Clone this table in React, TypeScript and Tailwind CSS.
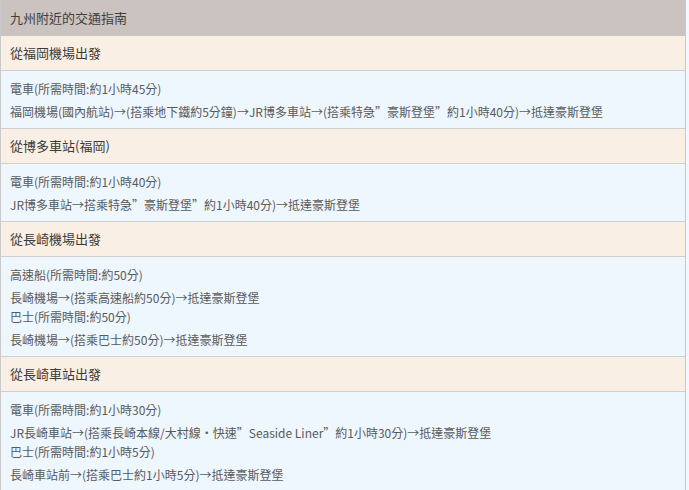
const sections = [
  {
    title: '從福岡機場出發',
    items: [
      {
        mode: '電車(所需時間:約1小時45分)',
        route: '福岡機場(國內航站)→(搭乘地下鐵約5分鐘)→JR博多車站→(搭乘特急”豪斯登堡”約1小時40分)→抵達豪斯登堡',
      },
    ],
  },
  {
    title: '從博多車站(福岡)',
    items: [
      {
        mode: '電車(所需時間:約1小時40分)',
        route: 'JR博多車站→搭乘特急”豪斯登堡”約1小時40分)→抵達豪斯登堡',
      },
    ],
  },
  {
    title: '從長崎機場出發',
    items: [
      { mode: '高速船(所需時間:約50分)', route: '長崎機場→(搭乘高速船約50分)→抵達豪斯登堡' },
      { mode: '巴士(所需時間:約50分)', route: '長崎機場→(搭乘巴士約50分)→抵達豪斯登堡' },
    ],
  },
  {
    title: '從長崎車站出發',
    items: [
      {
        mode: '電車(所需時間:約1小時30分)',
        route: 'JR長崎車站→(搭乘長崎本線/大村線・快速”Seaside Liner”約1小時30分)→抵達豪斯登堡',
      },
      { mode: '巴士(所需時間:約1小時5分)', route: '長崎車站前→(搭乘巴士約1小時5分)→抵達豪斯登堡' },
    ],
  },
];

export default function App() {
  return (
    <div className="min-h-[490px] bg-[#f3f8fe] font-['Noto_Sans_CJK_TC',sans-serif] text-[13px]">
      <div className="w-[686px] border-x border-[#c9c9c9]">
        <div className="flex h-[36px] items-center bg-[#cbc3bf] px-[9px] text-[#3f3f3f]">九州附近的交通指南</div>
        {sections.map((s) => (
          <div key={s.title}>
            <div className="flex h-[35px] items-center border-b border-[#cfcfcf] bg-[#f9efe4] px-[9px] text-[#3a3a3a]">
              {s.title}
            </div>
            <div className="border-b border-[#cfcfcf] bg-[#eef6fe] px-[9px] pt-[8px] pb-[7px] text-[12px] leading-[19px] text-[#5a5a5a]">
              {s.items.map((it) => (
                <div key={it.mode}>
                  <div>{it.mode}</div>
                  <div className="mt-[4px]">{it.route}</div>
                </div>
              ))}
            </div>
          </div>
        ))}
      </div>
    </div>
  );
}
